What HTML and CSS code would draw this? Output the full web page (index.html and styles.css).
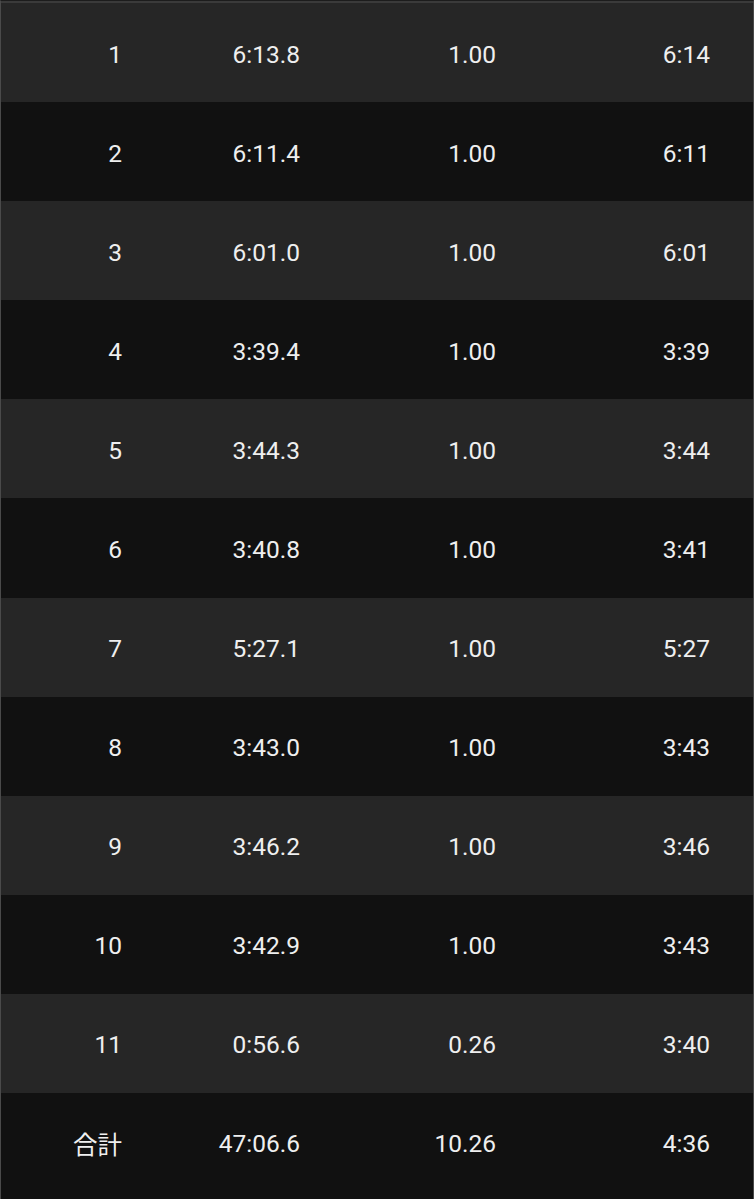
FILE: index.html
```html
<!DOCTYPE html>
<html lang="ja">
<head>
<meta charset="utf-8">
<link rel="stylesheet" href="styles.css">
</head>
<body>
<div class="table">
  <div class="row light"><span>1</span><span>6:13.8</span><span>1.00</span><span>6:14</span></div>
  <div class="row dark"><span>2</span><span>6:11.4</span><span>1.00</span><span>6:11</span></div>
  <div class="row light"><span>3</span><span>6:01.0</span><span>1.00</span><span>6:01</span></div>
  <div class="row dark"><span>4</span><span>3:39.4</span><span>1.00</span><span>3:39</span></div>
  <div class="row light"><span>5</span><span>3:44.3</span><span>1.00</span><span>3:44</span></div>
  <div class="row dark"><span>6</span><span>3:40.8</span><span>1.00</span><span>3:41</span></div>
  <div class="row light"><span>7</span><span>5:27.1</span><span>1.00</span><span>5:27</span></div>
  <div class="row dark"><span>8</span><span>3:43.0</span><span>1.00</span><span>3:43</span></div>
  <div class="row light"><span>9</span><span>3:46.2</span><span>1.00</span><span>3:46</span></div>
  <div class="row dark"><span>10</span><span>3:42.9</span><span>1.00</span><span>3:43</span></div>
  <div class="row light"><span>11</span><span>0:56.6</span><span>0.26</span><span>3:40</span></div>
  <div class="row dark total"><span>合計</span><span>47:06.6</span><span>10.26</span><span>4:36</span></div>
</div>
</body>
</html>
```
FILE: styles.css
```css
html, body {
  margin: 0;
  padding: 0;
  background: #111111;
}
body {
  width: 754px;
  height: 1199px;
  overflow: hidden;
  font-family: Roboto, "Noto Sans CJK JP", sans-serif;
  color: #efefef;
}
.table {
  box-sizing: border-box;
  width: 754px;
  min-height: 1199px;
  border-left: 1px solid #4a4a4a;
  border-right: 1px solid #4a4a4a;
  border-top: 1px solid #1c1c1c;
  background: #111111;
}
.table::before {
  content: "";
  display: block;
  height: 2px;
  background: #3a3a3a;
}
.row {
  display: grid;
  grid-template-columns: 121px 178px 196px 214px 1fr;
  align-items: center;
  height: 99.1px;
  box-sizing: border-box;
  padding-top: 3px;
  font-size: 24.5px;
}
.row span {
  justify-self: end;
  white-space: nowrap;
}
.light { background: #262626; }
.dark { background: #111111; }
.total { height: 106px; padding-top: 0; padding-bottom: 5px; }
```
